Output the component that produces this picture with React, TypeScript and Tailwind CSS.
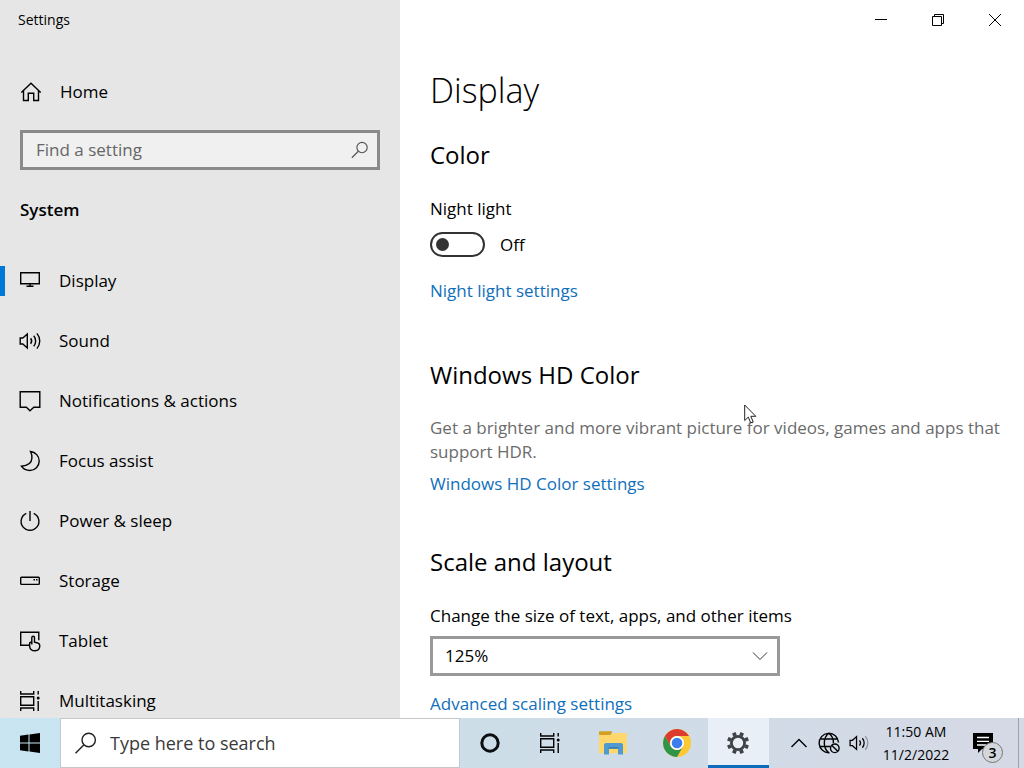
import { useState } from 'react'
import type { ReactNode } from 'react'

type IconProps = { children: ReactNode; className?: string }

// 22px line icon used by the sidebar and the tray
function Icon({ children, className = 'size-[22px]' }: IconProps) {
  return (
    <svg viewBox="0 0 22 22" fill="none" stroke="currentColor" strokeWidth="1.4" className={className} aria-hidden="true">
      {children}
    </svg>
  )
}

const taskViewShape = (
  <>
    <path d="M1.7 1v3h13V1M1.7 21v-3h13v3M1.7 6.7h13v8.6h-13zM19.2 1v3.4M19.2 11v10" />
    <circle cx="19.2" cy="8" r="1.5" fill="currentColor" stroke="none" />
  </>
)

const speakerShape = (
  <path d="M1.2 8v6h2.6L8.3 18V4L3.8 8zM11.6 8.2c1.3 1.7 1.3 3.9 0 5.6M14.7 5.8c2.6 3 2.6 7.4 0 10.4M17.9 3.4c3.8 4.5 3.8 10.7 0 15.2" />
)

const items = [
  {
    name: 'Display',
    icon: <path d="M1.7 2.7h18.6v11H1.7zM11 13.7V16M7.5 16.2h7" />,
  },
  { name: 'Sound', icon: speakerShape },
  {
    name: 'Notifications & actions',
    icon: <path d="M1.2 1.7h19.6v15.6h-6L11 20.8l-3.6-3.5H1.2z" />,
  },
  {
    name: 'Focus assist',
    icon: <path d="M11.5 1.5c5 .6 8.7 4.6 8.7 9.5 0 5.3-4.2 9.5-9.3 9.5-3.4 0-6.6-1.5-8.5-4.3 6.5-.5 10.2-3 10.5-8 .1-2.7-.3-4.7-1.4-6.7z" />,
  },
  {
    name: 'Power & sleep',
    icon: <path d="M11 1v10M7.3 3.3a8.9 8.9 0 1 0 7.4 0" />,
  },
  {
    name: 'Storage',
    icon: (
      <>
        <rect x="1.7" y="7.2" width="18.6" height="7.2" rx="0.8" />
        <path d="M14.5 9.7h1.5M17 9.7h1.5" />
      </>
    ),
  },
  {
    name: 'Tablet',
    icon: (
      <>
        <path d="M10.5 15.2H1.7V2.2h18.1v8" />
        <path d="M12.8 14.5V7.8c0-2 2.7-2 2.7 0v4.4l3.3.8c1.5.4 2 1.3 2 2.6 0 3.2-2 5.2-4.8 5.2-3 0-5-1.6-5.4-4.5v-3.1c0-1.2 2.2-1.2 2.2 0z" />
      </>
    ),
  },
  { name: 'Multitasking', icon: taskViewShape },
]

function Sidebar() {
  const [active, setActive] = useState('Display')

  return (
    <aside className="w-[400px] shrink-0 bg-[#e6e6e6]">
      <div className="flex h-10 items-center px-[18px] text-[14px]">Settings</div>
      <a href="#home" className="mt-[22px] flex h-[60px] items-center gap-[18px] px-5">
        <Icon>
          <path d="M1.3 11.5 11 2.2l9.7 9.3M3.5 9.8v9.7h4.8v-7.3h5.4v7.3h4.8V9.8" />
        </Icon>
        Home
      </a>
      <div className="mx-5 mt-2 flex h-10 items-center border-3 border-[#8a8a8a] bg-[#f0f0f0] pr-2 pl-[13px]">
        <input
          type="text"
          aria-label="Find a setting"
          placeholder="Find a setting"
          className="min-w-0 flex-1 bg-transparent outline-none placeholder:text-[#666666]"
        />
        <Icon className="size-[18px] text-[#555555]">
          <circle cx="13.5" cy="8" r="6.3" />
          <path d="m9 12.5-8 8" />
        </Icon>
      </div>
      <h2 className="mt-5 flex h-10 items-center px-5 font-semibold">System</h2>
      <nav className="mt-[21px]">
        {items.map((item) => (
          <a
            key={item.name}
            href={`#${item.name}`}
            onClick={() => setActive(item.name)}
            className="relative flex h-[60px] items-center gap-[18px] px-[19px]"
          >
            {active === item.name && <span className="absolute left-0 h-[30px] w-[5px] bg-[#0078d7]" />}
            <Icon>{item.icon}</Icon>
            {item.name}
          </a>
        ))}
      </nav>
    </aside>
  )
}

function WindowButtons() {
  return (
    <div className="flex h-10 justify-end pr-px">
      <button aria-label="Minimize" className="flex w-[57px] items-center justify-center">
        <svg viewBox="0 0 12 12" className="size-3" stroke="black">
          <path d="M0 5.5h12" />
        </svg>
      </button>
      <button aria-label="Restore" className="flex w-[57px] items-center justify-center">
        <svg viewBox="0 0 12 12" className="size-3" stroke="black" fill="none">
          <path d="M.5 2.5h9v9h-9zM2.5 2.5v-2h9v9h-2" />
        </svg>
      </button>
      <button aria-label="Close" className="flex w-[57px] items-center justify-center">
        <svg viewBox="0 0 12 12" className="size-3" stroke="black">
          <path d="m0 0 12 12M12 0 0 12" />
        </svg>
      </button>
    </div>
  )
}

function DisplayPage() {
  const [nightLight, setNightLight] = useState(false)

  return (
    <main className="min-w-0 flex-1 bg-white">
      <WindowButtons />
      <div className="pr-3 pl-[30px]">
        <h1 className="mt-6 text-[34px] leading-[52px] font-light">Display</h1>

        <section className="mt-[19px]">
          <h2 className="text-[24px] leading-10">Color</h2>
          <label htmlFor="night-light" className="mt-[22px] block">
            Night light
          </label>
          <div className="mt-[11px] flex items-center gap-[15px]">
            <input
              id="night-light"
              type="checkbox"
              role="switch"
              checked={nightLight}
              onChange={(e) => setNightLight(e.target.checked)}
              className="flex h-[25px] w-[55px] appearance-none items-center rounded-full border-2 border-[#333333] px-1 before:size-[13px] before:rounded-full before:bg-[#333333] checked:justify-end"
            />
            <span>{nightLight ? 'On' : 'Off'}</span>
          </div>
          <a href="#night-light-settings" className="mt-[22px] block text-[#0f6fbb]">
            Night light settings
          </a>
        </section>

        <section className="mt-[52px]">
          <h2 className="text-[24px] leading-10">Windows HD Color</h2>
          <p className="mt-[21px] text-[#6b6b6b]">
            Get a brighter and more vibrant picture for videos, games and apps that support HDR.
          </p>
          <a href="#hd-color" className="mt-2 block text-[#0f6fbb]">
            Windows HD Color settings
          </a>
        </section>

        <section className="mt-[46px]">
          <h2 className="text-[24px] leading-10">Scale and layout</h2>
          <label htmlFor="scale" className="mt-[22px] block">
            Change the size of text, apps, and other items
          </label>
          <div className="relative mt-2 max-w-[350px]">
            <select
              id="scale"
              defaultValue="125%"
              className="h-10 w-full appearance-none border-3 border-[#999999] bg-white px-3"
            >
              <option>100%</option>
              <option>125%</option>
              <option>150%</option>
              <option>175%</option>
            </select>
            <svg
              viewBox="0 0 16 16"
              fill="none"
              stroke="#333333"
              className="pointer-events-none absolute top-3 right-3 size-4"
            >
              <path d="m1 4.5 7 7 7-7" />
            </svg>
          </div>
          <a href="#scaling" className="mt-4 block text-[#0f6fbb]">
            Advanced scaling settings
          </a>
        </section>
      </div>
    </main>
  )
}

function Taskbar() {
  return (
    <footer className="flex h-[50px] shrink-0 bg-linear-to-r from-[#c9e5f2] via-[#cddde8] to-[#d5d9e5]">
      <button aria-label="Start" className="flex w-[60px] items-center justify-center">
        <svg viewBox="0 0 20 20" className="size-5">
          <path d="M0 2.8 8.5 1.6v8H0zM9.5 1.4 20 0v9.6H9.5zM0 10.5h8.5v8L0 17.3zM9.5 10.5H20V20L9.5 18.6z" />
        </svg>
      </button>
      <div className="flex w-[400px] items-center gap-[13px] border border-[#c4c8ca] bg-white px-[14px]">
        <Icon className="size-[22px] text-[#222222]">
          <circle cx="13.7" cy="8" r="6.7" />
          <path d="m9 12.8-8.5 8.5" />
        </Icon>
        <input
          type="text"
          aria-label="Type here to search"
          placeholder="Type here to search"
          className="min-w-0 flex-1 text-[18px] outline-none placeholder:text-[#3a3a3a]"
        />
      </div>

      <button aria-label="Cortana" className="flex w-[60px] items-center justify-center">
        <svg viewBox="0 0 20 20" className="size-5" fill="none" stroke="#0b0f12" strokeWidth="3">
          <circle cx="10" cy="10" r="8.2" />
        </svg>
      </button>
      <button aria-label="Task View" className="flex w-[60px] items-center justify-center">
        <Icon>{taskViewShape}</Icon>
      </button>
      <button aria-label="File Explorer" className="flex w-[66px] items-center justify-center">
        <svg viewBox="0 0 28 24" className="h-6 w-7">
          <path fill="#ffd76b" d="M0 3.5h13l2-1.5h11.5c.7 0 1.2.5 1.2 1.200V21c0 .7-.5 1.200-1.200 1.200H1.200C.5 22.200 0 21.700 0 21z" />
          <path fill="#d0a021" d="M0 1.200C0 .6.500.2 1 .2h11.300c.9 0 1 .7.600 1.400L12 3.200c-.4.700-.8.900-1.500.9H0z" />
          <path fill="#4f9bd0" d="M5 14.200c0-1.300 1-2.200 2.200-2.200h14.600c1.200 0 2.200.9 2.200 2.200V23.500h-5v-5.800h-9v5.800H5z" />
          <path fill="#3a7fb5" d="M9.500 16h10v1.700h-10z" />
        </svg>
      </button>
      <button aria-label="Chrome" className="flex w-[62px] items-center justify-center">
        <svg viewBox="0 0 28 28" className="size-7">
          <circle cx="14" cy="14" r="14" fill="#fcc934" />
          <path fill="#dd3b30" d="M1.900 7A14 14 0 0 1 26.100 7H14a7 7 0 0 0-6.060 10.500z" />
          <path fill="#2f9448" d="M1.900 7A14 14 0 0 0 14 28l6.060-10.500a7 7 0 0 1-12.120 0z" />
          <circle cx="14" cy="14" r="7" fill="white" />
          <circle cx="14" cy="14" r="5.300" fill="#3b7ded" />
        </svg>
      </button>
      <button
        aria-label="Settings"
        className="flex w-[61px] items-center justify-center border-b-3 border-[#0f6cbd] bg-[#e9eff7] pt-[3px]"
      >
        <svg viewBox="-11 -12 24 24" className="size-6" fill="none" stroke="#3f4347">
          <circle r="6.600" strokeWidth="2.800" />
          <path
            strokeWidth="3.800"
            d="M2.900-7 4.200-10.200M-2.900-7-4.200-10.200M2.900 7l1.300 3.200M-2.900 7l-1.300 3.200M7-2.900l3.200-1.300M7 2.900l3.200 1.300M-7-2.900l-3.200-1.300M-7 2.900l-3.200 1.300"
          />
        </svg>
      </button>

      <div className="ml-auto flex text-black">
        <button aria-label="Show hidden icons" className="flex w-[30px] items-center justify-center">
          <svg viewBox="0 0 16 16" className="size-4" fill="none" stroke="currentColor" strokeWidth="1.4">
            <path d="m.5 12 7.500-7.500 7.500 7.500" />
          </svg>
        </button>
        <button aria-label="Network" className="flex w-[30px] items-center justify-center">
          <Icon>
            <path d="M20.500 10.500A9.700 9.700 0 1 0 11.500 20.700M10.800 1.300c-6 4.700-6 14.700 0 19.400M10.800 1.300c3.300 2.500 4.800 6 4.600 9.700M2.400 7h16.800M1.600 14.500h10.500" />
            <circle cx="16.800" cy="16.300" r="4.300" />
            <path d="m13.900 13.400 5.900 5.900" />
          </Icon>
        </button>
        <button aria-label="Volume" className="flex w-[30px] items-center justify-center">
          <Icon className="size-5">
            <path d="M1.200 8v6h2.600L8.300 18V4L3.800 8zM11.600 8.200c1.300 1.700 1.300 3.900 0 5.600M14.700 5.800c2.600 3 2.600 7.400 0 10.400" />
            <path stroke="#8e959f" d="M17.900 3.400c3.800 4.500 3.800 10.700 0 15.200" />
          </Icon>
        </button>
        <button className="w-[84px] text-[14px] leading-[23px]">
          <span className="block">11:50 AM</span>
          <span className="block">11/2/2022</span>
        </button>
        <button aria-label="Notifications" className="flex w-[60px] items-center justify-center">
          <span className="relative mr-[10px]">
            <svg viewBox="0 0 20 20" className="size-5">
              <path d="M0 0h20v16H9l-4 4v-4H0z" />
              <path stroke="white" strokeWidth="1.3" d="M4 4.500h12M4 8.300h12M4 12h9" />
            </svg>
            <span className="absolute top-[9px] left-[9px] flex size-[21px] items-center justify-center rounded-full border border-[#777777] bg-[#d3d6dc] text-[14px] font-semibold">
              3
            </span>
          </span>
        </button>
        <button aria-label="Show desktop" className="w-[6px] border-l border-[#9aa2ac]" />
      </div>
    </footer>
  )
}

export default function App() {
  return (
    <div className="relative flex h-screen flex-col overflow-hidden font-['Open_Sans','Noto_Sans',sans-serif] text-[17px] leading-6 text-black">
      <div className="flex min-h-0 flex-1 overflow-hidden">
        <Sidebar />
        <DisplayPage />
      </div>
      <Taskbar />

      {/* Mouse pointer */}
      <svg viewBox="0 0 13 20" className="pointer-events-none absolute top-[404px] left-[744px] h-5 w-[13px]">
        <path d="M.7 1v15.500l3.600-3.400 2.400 5.700 2.500-1-2.400-5.500h5z" fill="white" stroke="#222222" />
      </svg>
    </div>
  )
}
